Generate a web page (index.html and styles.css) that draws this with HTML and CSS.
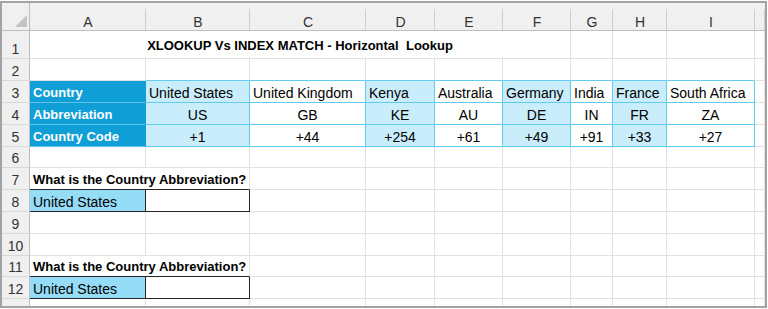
FILE: index.html
```html
<!DOCTYPE html>
<html lang="en">
<head>
  <meta charset="UTF-8">
  <meta name="viewport" content="width=device-width, initial-scale=1.0">
  <title>XLOOKUP Vs INDEX MATCH</title>
  <link rel="stylesheet" href="styles.css">
</head>
<body>
  <div class="sheet">
    <!-- column headers -->
    <div class="corner">
      <svg width="12" height="12" viewBox="0 0 12 12"><polygon points="12,0 12,12 0,12" fill="#c4c4c4"/></svg>
    </div>
    <div class="hd">A</div>
    <div class="hd">B</div>
    <div class="hd">C</div>
    <div class="hd">D</div>
    <div class="hd">E</div>
    <div class="hd">F</div>
    <div class="hd">G</div>
    <div class="hd">H</div>
    <div class="hd">I</div>
    <div class="hd"></div>

    <!-- row 1 -->
    <div class="rn">1</div>
    <div class="c title">XLOOKUP Vs INDEX MATCH - Horizontal  Lookup</div>
    <div class="c"></div><div class="c"></div><div class="c"></div><div class="c"></div>

    <!-- row 2 -->
    <div class="rn">2</div>
    <div class="c"></div>
    <div class="c tt"></div><div class="c tt"></div><div class="c tt"></div><div class="c tt"></div>
    <div class="c tt"></div><div class="c tt"></div><div class="c tt"></div><div class="c tt"></div>
    <div class="c"></div>

    <!-- row 3 -->
    <div class="rn">3</div>
    <div class="c dk">Country</div>
    <div class="c tb lt">United States</div>
    <div class="c tb">United Kingdom</div>
    <div class="c tb lt">Kenya</div>
    <div class="c tb">Australia</div>
    <div class="c tb lt">Germany</div>
    <div class="c tb">India</div>
    <div class="c tb lt">France</div>
    <div class="c tb">South Africa</div>
    <div class="c"></div>

    <!-- row 4 -->
    <div class="rn">4</div>
    <div class="c dk">Abbreviation</div>
    <div class="c tb lt mid">US</div>
    <div class="c tb mid">GB</div>
    <div class="c tb lt mid">KE</div>
    <div class="c tb mid">AU</div>
    <div class="c tb lt mid">DE</div>
    <div class="c tb mid">IN</div>
    <div class="c tb lt mid">FR</div>
    <div class="c tb mid">ZA</div>
    <div class="c"></div>

    <!-- row 5 -->
    <div class="rn">5</div>
    <div class="c dk">Country Code</div>
    <div class="c tb lt mid">+1</div>
    <div class="c tb mid">+44</div>
    <div class="c tb lt mid">+254</div>
    <div class="c tb mid">+61</div>
    <div class="c tb lt mid">+49</div>
    <div class="c tb mid">+91</div>
    <div class="c tb lt mid">+33</div>
    <div class="c tb mid">+27</div>
    <div class="c"></div>

    <!-- row 6 -->
    <div class="rn">6</div>
    <div class="c"></div><div class="c"></div><div class="c"></div><div class="c"></div><div class="c"></div>
    <div class="c"></div><div class="c"></div><div class="c"></div><div class="c"></div><div class="c"></div>

    <!-- row 7 -->
    <div class="rn">7</div>
    <div class="c ask">What is the Country Abbreviation?</div>
    <div class="c"></div><div class="c"></div><div class="c"></div><div class="c"></div>
    <div class="c"></div><div class="c"></div><div class="c"></div><div class="c"></div>

    <!-- row 8 -->
    <div class="rn">8</div>
    <div class="c pick">United States</div>
    <div class="c box"></div>
    <div class="c"></div><div class="c"></div><div class="c"></div><div class="c"></div>
    <div class="c"></div><div class="c"></div><div class="c"></div><div class="c"></div>

    <!-- row 9 -->
    <div class="rn">9</div>
    <div class="c"></div><div class="c"></div><div class="c"></div><div class="c"></div><div class="c"></div>
    <div class="c"></div><div class="c"></div><div class="c"></div><div class="c"></div><div class="c"></div>

    <!-- row 10 -->
    <div class="rn">10</div>
    <div class="c"></div><div class="c"></div><div class="c"></div><div class="c"></div><div class="c"></div>
    <div class="c"></div><div class="c"></div><div class="c"></div><div class="c"></div><div class="c"></div>

    <!-- row 11 -->
    <div class="rn">11</div>
    <div class="c ask">What is the Country Abbreviation?</div>
    <div class="c"></div><div class="c"></div><div class="c"></div><div class="c"></div>
    <div class="c"></div><div class="c"></div><div class="c"></div><div class="c"></div>

    <!-- row 12 -->
    <div class="rn">12</div>
    <div class="c pick">United States</div>
    <div class="c box"></div>
    <div class="c"></div><div class="c"></div><div class="c"></div><div class="c"></div>
    <div class="c"></div><div class="c"></div><div class="c"></div><div class="c"></div>

    <!-- row 13 -->
    <div class="rn">13</div>
    <div class="c"></div><div class="c"></div><div class="c"></div><div class="c"></div><div class="c"></div>
    <div class="c"></div><div class="c"></div><div class="c"></div><div class="c"></div><div class="c"></div>
  </div>
</body>
</html>
```

FILE: styles.css
```css
body {
  margin: 0;
  background: #fff;
  font-family: "Liberation Sans", Arial, sans-serif;
  font-size: 14px;
  color: #000;
}

.sheet {
  margin: 1px 1px 0 0;
  height: 303px;
  border: 2px solid #a3a3a3;
  display: grid;
  grid-template-columns: 28px 116px 104px 116px 69px 68px 68px 42px 54px 88px 1fr;
  grid-template-rows: 28px 28px 22px 22px 22px 22px 21px 22px 22px 22px 22px 21px 22px 22px;
  overflow: hidden;
}

.sheet > div {
  box-sizing: border-box;
  display: flex;
  align-items: flex-end;
  min-width: 0;
  line-height: 16px;
  white-space: nowrap;
}

/* headers */
.corner {
  justify-content: flex-end;
  padding: 0 2px 3px 0;
  background: #f0f0f0;
  border-right: 1px solid #bfbfbf;
  border-bottom: 1px solid #bfbfbf;
}

.hd {
  justify-content: center;
  color: #333;
  background: #f0f0f0 linear-gradient(#cdcdcd, #cdcdcd) no-repeat right bottom / 1px 21px;
  border-bottom: 1px solid #bfbfbf;
}

.rn {
  justify-content: center;
  padding-bottom: 1px;
  color: #333;
  background: #f0f0f0;
  border-right: 1px solid #bfbfbf;
  border-bottom: 1px solid #d9d9d9;
}

/* cells */
.c {
  padding: 0 3px 1px;
  border-right: 1px solid #e1e1e1;
  border-bottom: 1px solid #e1e1e1;
}

.title {
  grid-column: span 6;
  justify-content: center;
  padding-bottom: 4px;
  font-size: 13px;
  font-weight: bold;
  white-space: pre !important;
}

.mid {
  justify-content: center;
}

.tt {
  border-bottom-color: #61cbf3;
}

.tb {
  border-right-color: #61cbf3;
  border-bottom-color: #61cbf3;
}

.lt {
  background: #caedfb;
}

.dk {
  background: #0f9ed5;
  color: #fff;
  font-size: 13px;
  font-weight: bold;
  border-right-color: #0f9ed5;
  border-bottom-color: #5ec3ec;
}

.ask {
  grid-column: span 2;
  font-size: 13px;
  font-weight: bold;
  border-bottom-color: #262626;
}

.pick {
  background: #95dcf7;
  border-right-color: #262626;
  border-bottom-color: #262626;
}

.box {
  border-right-color: #262626;
  border-bottom-color: #262626;
}
```
